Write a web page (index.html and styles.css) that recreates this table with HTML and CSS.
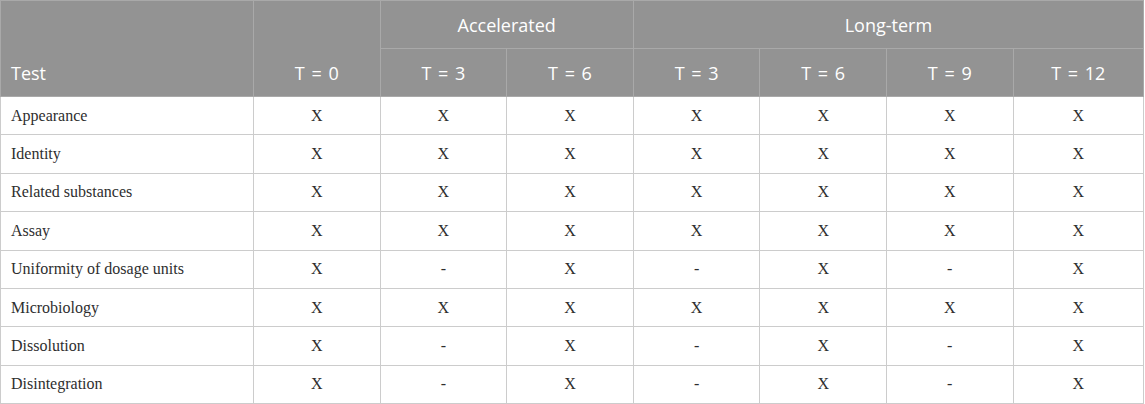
FILE: index.html
```html
<!DOCTYPE html>
<html>
<head>
<meta charset="utf-8">
<link rel="stylesheet" href="styles.css">
</head>
<body>
<table class="stab">
  <colgroup>
    <col class="c-test">
    <col class="c-val"><col class="c-val"><col class="c-val"><col class="c-val"><col class="c-val"><col class="c-val"><col>
  </colgroup>
  <thead>
    <tr class="h1">
      <th class="left" rowspan="2">Test</th>
      <th rowspan="2">T = 0</th>
      <th colspan="2" class="group">Accelerated</th>
      <th colspan="4" class="group">Long-term</th>
    </tr>
    <tr class="h2">
      <th>T = 3</th>
      <th>T = 6</th>
      <th>T = 3</th>
      <th>T = 6</th>
      <th>T = 9</th>
      <th>T = 12</th>
    </tr>
  </thead>
  <tbody>
    <tr><td class="left">Appearance</td><td>X</td><td>X</td><td>X</td><td>X</td><td>X</td><td>X</td><td>X</td></tr>
    <tr><td class="left">Identity</td><td>X</td><td>X</td><td>X</td><td>X</td><td>X</td><td>X</td><td>X</td></tr>
    <tr><td class="left">Related substances</td><td>X</td><td>X</td><td>X</td><td>X</td><td>X</td><td>X</td><td>X</td></tr>
    <tr><td class="left">Assay</td><td>X</td><td>X</td><td>X</td><td>X</td><td>X</td><td>X</td><td>X</td></tr>
    <tr><td class="left">Uniformity of dosage units</td><td>X</td><td>-</td><td>X</td><td>-</td><td>X</td><td>-</td><td>X</td></tr>
    <tr><td class="left">Microbiology</td><td>X</td><td>X</td><td>X</td><td>X</td><td>X</td><td>X</td><td>X</td></tr>
    <tr><td class="left">Dissolution</td><td>X</td><td>-</td><td>X</td><td>-</td><td>X</td><td>-</td><td>X</td></tr>
    <tr><td class="left">Disintegration</td><td>X</td><td>-</td><td>X</td><td>-</td><td>X</td><td>-</td><td>X</td></tr>
  </tbody>
</table>
</body>
</html>
```
FILE: styles.css
```css
html, body {
  margin: 0;
  padding: 0;
  background: #ffffff;
}

.stab {
  border-collapse: collapse;
  table-layout: fixed;
  width: 1144px;
}

.c-test {
  width: 253px;
}

.c-val {
  width: 126.6px;
}

.stab th {
  background: #939393;
  color: #ffffff;
  font-family: "Open Sans", "Liberation Sans", sans-serif;
  font-weight: 400;
  font-size: 18px;
  word-spacing: 2px;
  border: 1px solid #a9a9a9;
  padding: 0 10px;
  text-align: center;
  vertical-align: middle;
}

.stab thead tr {
  height: 48px;
}

.stab th[rowspan] {
  vertical-align: bottom;
  padding-bottom: 11px;
}

.stab th.left {
  text-align: left;
}

.stab td {
  font-family: "Liberation Serif", "Times New Roman", serif;
  font-size: 16px;
  color: #2e2e2e;
  border: 1px solid #cccccc;
  padding: 0 10px;
  text-align: center;
  vertical-align: middle;
}

.stab tbody tr {
  height: 38.4px;
}

.stab td.left {
  text-align: left;
}
```
